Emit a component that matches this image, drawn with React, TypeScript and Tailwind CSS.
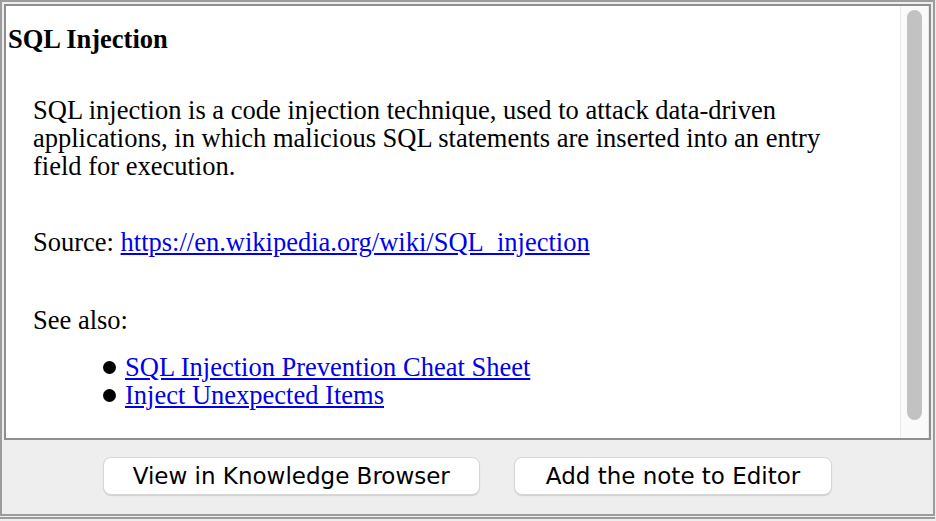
export default function App() {
  const serif = { fontFamily: '"Liberation Serif", "Times New Roman", serif' };
  return (
    <div className="h-[521px] w-[936px] overflow-hidden bg-[#eeeeee]">
      <div className="flex h-[516px] w-[935px] flex-col border-2 border-[#9c9c9c]">
        {/* scroll pane */}
        <div className="mx-[2px] mt-[2px] flex h-[436px] border-2 border-[#8f8f8f] bg-white">
          <div className="flex-1 pl-[2px] text-[26.5px] leading-[28px] text-black" style={serif}>
            <h1 className="mt-[19px] text-[26.5px] font-bold leading-[28px]">SQL Injection</h1>
            <div className="pl-[25px]">
              <p className="mt-[43px]">
                SQL injection is a code injection technique, used to attack data-driven
                <br />
                applications, in which malicious SQL statements are inserted into an entry
                <br />
                field for execution.
              </p>
              <p className="mt-[48px]">
                Source:{" "}
                <a href="#" className="text-[#0000ee] underline">
                  https://en.wikipedia.org/wiki/SQL_injection
                </a>
              </p>
              <p className="mt-[50px]">See also:</p>
              <ul className="mt-[19px] pl-[70px]">
                <li className="flex items-center gap-[9px]">
                  <span className="h-[13px] w-[13px] rounded-full bg-black" />
                  <a href="#" className="text-[#0000ee] underline">
                    SQL Injection Prevention Cheat Sheet
                  </a>
                </li>
                <li className="flex items-center gap-[9px]">
                  <span className="h-[13px] w-[13px] rounded-full bg-black" />
                  <a href="#" className="text-[#0000ee] underline">
                    Inject Unexpected Items
                  </a>
                </li>
              </ul>
            </div>
          </div>
          {/* scrollbar */}
          <div className="flex w-[29px] border-x border-[#e8e8e8] bg-[#fafafa] pb-[18px] pl-[6px] pt-[4px]">
            <div className="w-[15px] rounded-full bg-[#c2c2c2]" />
          </div>
        </div>
        {/* buttons */}
        <div
          className="flex flex-1 items-center justify-center gap-[34px] pb-[3px] text-[23px] text-black"
          style={{ fontFamily: '"DejaVu Sans", "Lucida Grande", sans-serif' }}
        >
          <button className="h-[38px] rounded-[8px] border border-[#d6d6d6] bg-white px-[29px] leading-[36px] shadow-[0_1px_1px_rgba(0,0,0,0.12)]">
            View in Knowledge Browser
          </button>
          <button className="h-[38px] rounded-[8px] border border-[#d6d6d6] bg-white px-[31px] leading-[36px] shadow-[0_1px_1px_rgba(0,0,0,0.12)]">
            Add the note to Editor
          </button>
        </div>
      </div>
      <div className="mt-[1px] h-[2px] w-[935px] bg-[#9c9c9c]" />
    </div>
  );
}
